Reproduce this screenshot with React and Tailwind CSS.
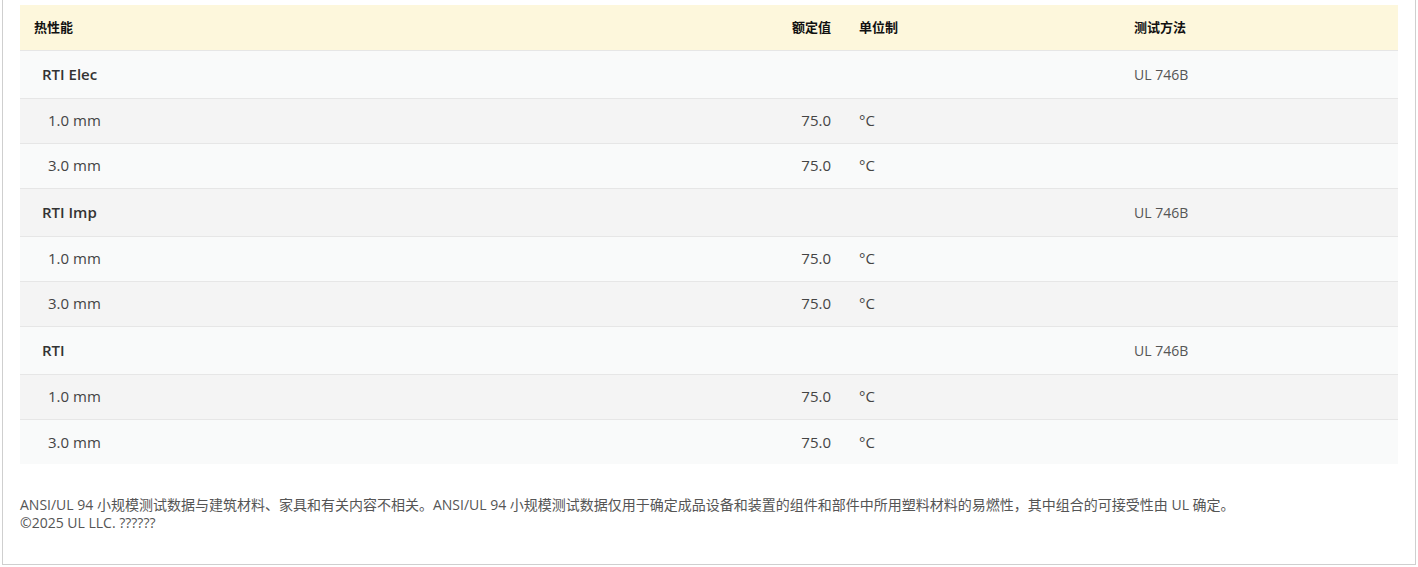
const rows = [
  { label: 'RTI Elec', group: true, method: 'UL 746B' },
  { label: '1.0 mm', value: '75.0', unit: '°C' },
  { label: '3.0 mm', value: '75.0', unit: '°C' },
  { label: 'RTI Imp', group: true, method: 'UL 746B' },
  { label: '1.0 mm', value: '75.0', unit: '°C' },
  { label: '3.0 mm', value: '75.0', unit: '°C' },
  { label: 'RTI', group: true, method: 'UL 746B' },
  { label: '1.0 mm', value: '75.0', unit: '°C' },
  { label: '3.0 mm', value: '75.0', unit: '°C' },
]

export default function App() {
  return (
    <div
      className="w-[1418px] h-[567px] bg-white"
      style={{ fontFamily: '"Open Sans", "Noto Sans CJK SC", sans-serif' }}
    >
      <div className="mx-[2px] h-[565px] border-x border-b border-[#cfcfcf] pt-[5px] px-[17px]">
        <table className="w-full border-collapse text-[15px] table-fixed">
          <thead>
            <tr className="h-[45px] bg-[#fdf7dc] text-[13px] font-bold text-[#111]">
              <th className="text-left pl-[14px] font-bold">热性能</th>
              <th className="text-right w-[120px] font-bold">额定值</th>
              <th className="text-left w-[303px] pl-[28px] font-bold">单位制</th>
              <th className="text-left w-[264px] font-bold">测试方法</th>
            </tr>
          </thead>
          <tbody>
            {rows.map((r, i) => (
              <tr
                key={i}
                className={`border-t border-[#e6e6e6] ${i % 2 === 0 ? 'bg-[#f9fafa]' : 'bg-[#f4f4f4]'} ${r.group ? 'h-[48px]' : 'h-[45px]'}`}
              >
                {r.group ? (
                  <td className="pl-[22px] font-semibold text-[#333]">{r.label}</td>
                ) : (
                  <td className="pl-[28px] text-[#444]">{r.label}</td>
                )}
                <td className="text-right text-[#444]">{r.value}</td>
                <td className="pl-[28px] text-[#444]">{r.unit}</td>
                <td className="text-[14px] text-[#555]">{r.method}</td>
              </tr>
            ))}
          </tbody>
        </table>
        <div className="mt-[32px] text-[14px] leading-[18px] text-[#555]">
          <p>ANSI/UL 94 小规模测试数据与建筑材料、家具和有关内容不相关。ANSI/UL 94 小规模测试数据仅用于确定成品设备和装置的组件和部件中所用塑料材料的易燃性，其中组合的可接受性由 UL 确定。</p>
          <p>©2025 UL LLC. ??????</p>
        </div>
      </div>
    </div>
  )
}
